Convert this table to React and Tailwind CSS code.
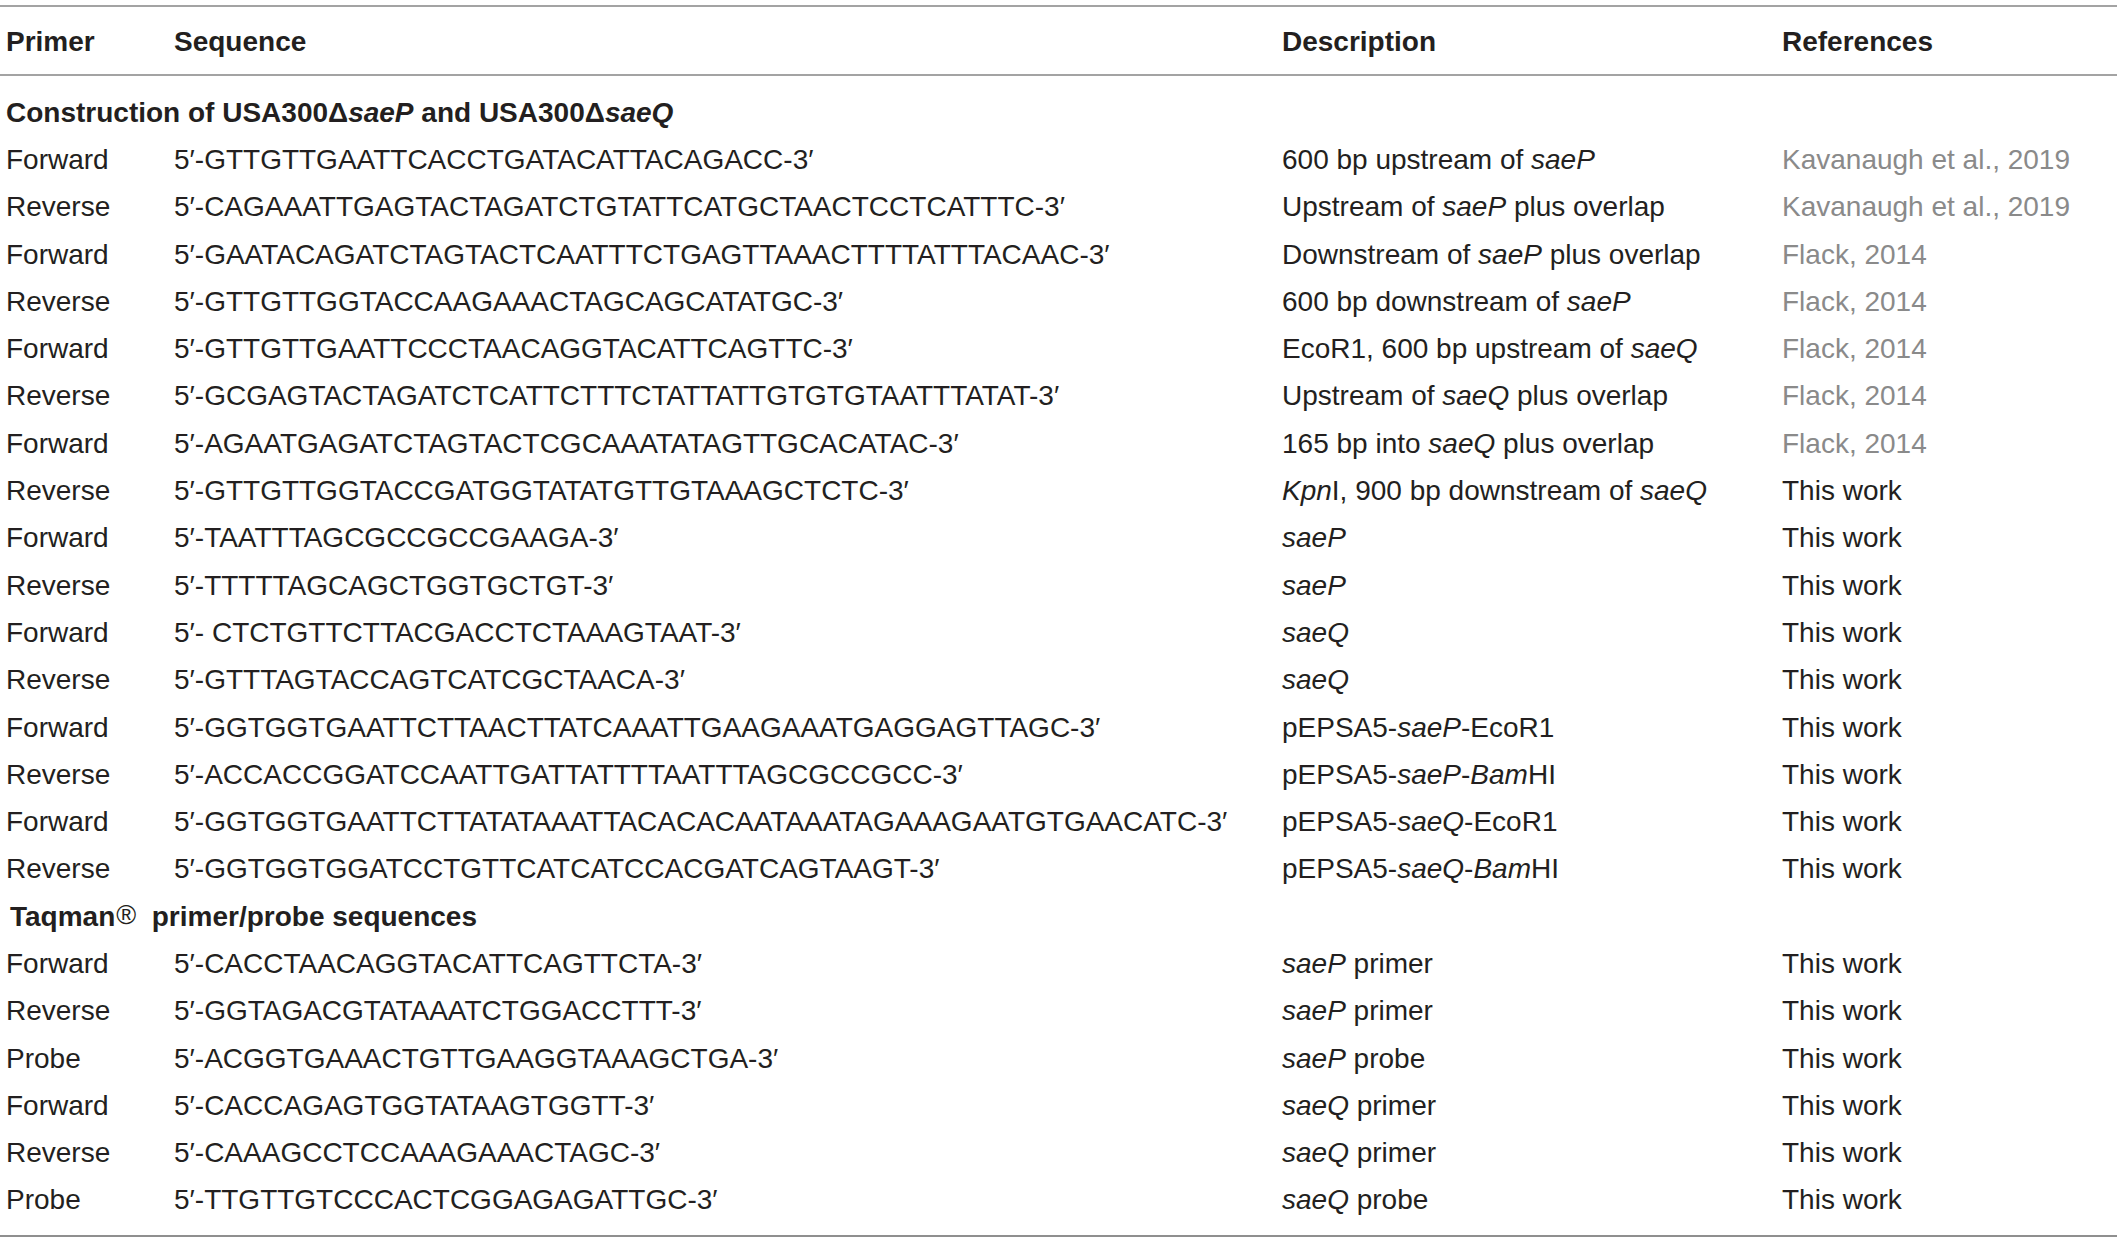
import React from "react";

const gray = "text-[#8a8a8a]";

const section1 = [
  ["Forward", "5′-GTTGTTGAATTCACCTGATACATTACAGACC-3′", <>600 bp upstream of <i>saeP</i></>, "Kavanaugh et al., 2019", true],
  ["Reverse", "5′-CAGAAATTGAGTACTAGATCTGTATTCATGCTAACTCCTCATTTC-3′", <>Upstream of <i>saeP</i> plus overlap</>, "Kavanaugh et al., 2019", true],
  ["Forward", "5′-GAATACAGATCTAGTACTCAATTTCTGAGTTAAACTTTTATTTACAAC-3′", <>Downstream of <i>saeP</i> plus overlap</>, "Flack, 2014", true],
  ["Reverse", "5′-GTTGTTGGTACCAAGAAACTAGCAGCATATGC-3′", <>600 bp downstream of <i>saeP</i></>, "Flack, 2014", true],
  ["Forward", "5′-GTTGTTGAATTCCCTAACAGGTACATTCAGTTC-3′", <>EcoR1, 600 bp upstream of <i>saeQ</i></>, "Flack, 2014", true],
  ["Reverse", "5′-GCGAGTACTAGATCTCATTCTTTCTATTATTGTGTGTAATTTATAT-3′", <>Upstream of <i>saeQ</i> plus overlap</>, "Flack, 2014", true],
  ["Forward", "5′-AGAATGAGATCTAGTACTCGCAAATATAGTTGCACATAC-3′", <>165 bp into <i>saeQ</i> plus overlap</>, "Flack, 2014", true],
  ["Reverse", "5′-GTTGTTGGTACCGATGGTATATGTTGTAAAGCTCTC-3′", <><i>Kpn</i>I, 900 bp downstream of <i>saeQ</i></>, "This work"],
  ["Forward", "5′-TAATTTAGCGCCGCCGAAGA-3′", <i>saeP</i>, "This work"],
  ["Reverse", "5′-TTTTTAGCAGCTGGTGCTGT-3′", <i>saeP</i>, "This work"],
  ["Forward", "5′- CTCTGTTCTTACGACCTCTAAAGTAAT-3′", <i>saeQ</i>, "This work"],
  ["Reverse", "5′-GTTTAGTACCAGTCATCGCTAACA-3′", <i>saeQ</i>, "This work"],
  ["Forward", "5′-GGTGGTGAATTCTTAACTTATCAAATTGAAGAAATGAGGAGTTAGC-3′", <>pEPSA5-<i>saeP</i>-EcoR1</>, "This work"],
  ["Reverse", "5′-ACCACCGGATCCAATTGATTATTTTAATTTAGCGCCGCC-3′", <>pEPSA5-<i>saeP</i>-<i>Bam</i>HI</>, "This work"],
  ["Forward", "5′-GGTGGTGAATTCTTATATAAATTACACACAATAAATAGAAAGAATGTGAACATC-3′", <>pEPSA5-<i>saeQ</i>-EcoR1</>, "This work"],
  ["Reverse", "5′-GGTGGTGGATCCTGTTCATCATCCACGATCAGTAAGT-3′", <>pEPSA5-<i>saeQ</i>-<i>Bam</i>HI</>, "This work"],
];

const section2 = [
  ["Forward", "5′-CACCTAACAGGTACATTCAGTTCTA-3′", <><i>saeP</i> primer</>, "This work"],
  ["Reverse", "5′-GGTAGACGTATAAATCTGGACCTTT-3′", <><i>saeP</i> primer</>, "This work"],
  ["Probe", "5′-ACGGTGAAACTGTTGAAGGTAAAGCTGA-3′", <><i>saeP</i> probe</>, "This work"],
  ["Forward", "5′-CACCAGAGTGGTATAAGTGGTT-3′", <><i>saeQ</i> primer</>, "This work"],
  ["Reverse", "5′-CAAAGCCTCCAAAGAAACTAGC-3′", <><i>saeQ</i> primer</>, "This work"],
  ["Probe", "5′-TTGTTGTCCCACTCGGAGAGATTGC-3′", <><i>saeQ</i> probe</>, "This work"],
];

const Row = ({ row }) => {
  const [primer, seq, desc, ref, cited] = row;
  return (
    <div className="grid grid-cols-[174px_1108px_500px_1fr] h-[47.3px] items-center">
      <div className="pl-[6px]">{primer}</div>
      <div className="whitespace-pre">{seq}</div>
      <div className="whitespace-nowrap">{desc}</div>
      <div className={cited ? gray : ""}>{ref}</div>
    </div>
  );
};

const SectionTitle = ({ children, indent }) => (
  <div className={`h-[47.3px] flex items-center font-bold whitespace-pre ${indent ? "pl-[10px]" : "pl-[6px]"}`}>
    {children}
  </div>
);

export default function App() {
  return (
    <div
      className="w-[2117px] h-[1242px] bg-white text-[#231f20] text-[28px] leading-none pt-[5px]"
      style={{ fontFamily: '"Liberation Sans", Arial, sans-serif' }}
    >
      <div className="border-t-2 border-[#a3a3a3]" />
      <div className="grid grid-cols-[174px_1108px_500px_1fr] h-[67px] items-center font-bold pt-[2px]">
        <div className="pl-[6px]">Primer</div>
        <div>Sequence</div>
        <div>Description</div>
        <div>References</div>
      </div>
      <div className="border-t-2 border-[#a3a3a3]" />
      <div className="pt-[13px]">
        <SectionTitle>
          <span>Construction of USA300Δ<i>saeP</i>{" "}and USA300Δ<i>saeQ</i></span>
        </SectionTitle>
        {section1.map((r, i) => (
          <Row key={i} row={r} />
        ))}
        <SectionTitle indent>
          <span>
            Taqman<sup className="text-[27px] font-normal relative -top-[2px] ml-[1px]">®</sup>{"  "}primer/probe sequences
          </span>
        </SectionTitle>
        {section2.map((r, i) => (
          <Row key={i} row={r} />
        ))}
      </div>
      <div className="mt-[11px] border-t-2 border-[#8f8f8f]" />
    </div>
  );
}
